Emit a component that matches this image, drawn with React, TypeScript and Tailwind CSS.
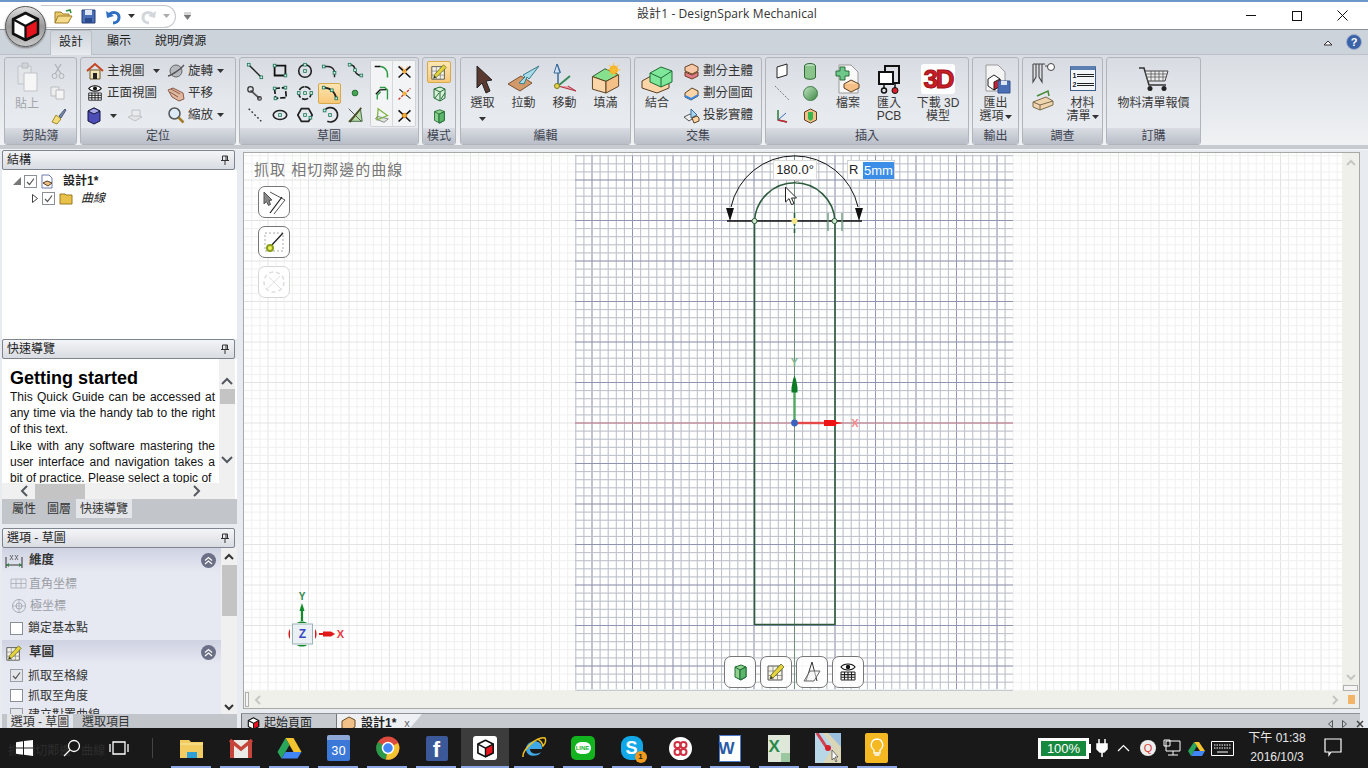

import React from "react";

const Sv = ({ w = 20, h = 20, vb, children, className = "" }: { w?: number; h?: number; vb?: string; children?: React.ReactNode; className?: string }) => (
  <svg width={w} height={h} viewBox={vb || `0 0 ${w} ${h}`} className={`shrink-0 ${className}`} fill="none">{children}</svg>
);
const P = ({ x, y }: { x: number; y: number }) => <rect x={x - 1.5} y={y - 1.5} width={3} height={3} fill="#d5efdc" stroke="#18745a" strokeWidth={0.9} />;
const Caret = ({ className = "" }: { className?: string }) => (
  <svg width={7} height={4} viewBox="0 0 7 4" className={`shrink-0 ${className}`}><path d="M0 0h7L3.5 4z" fill="#333" /></svg>
);

/* logo cube */
const Cube = ({ s = 30 }: { s?: number }) => (
  <Sv w={s} h={s} vb="0 0 30 30">
    <path d="M15 2l12 6v14l-12 6-12-6V8z" fill="#fff" stroke="#111" strokeWidth={2.6} strokeLinejoin="round" />
    <path d="M15 14.5L27 8v14l-12 6z" fill="#e5141d" stroke="#111" strokeWidth={2.2} strokeLinejoin="round" />
    <path d="M3 8l12 6.5" stroke="#111" strokeWidth={2.4} />
  </Sv>
);

/* sketch tools */
const tools: React.ReactNode[] = [
  <><path d="M3 3L17 17" stroke="#222" strokeWidth={1.6} /><P x={3} y={3} /><P x={17} y={17} /></>,
  <><path d="M4 4h12v11H4z" stroke="#111" strokeWidth={2} /><P x={4} y={4} /><P x={16} y={15} /></>,
  <><circle cx={10} cy={10} r={7} stroke="#222" strokeWidth={1.8} /><P x={10} y={10} /><P x={10} y={3} /></>,
  <><path d="M3 5h5a7 7 0 0 1 7 7v5" stroke="#222" strokeWidth={1.6} /><P x={3} y={5} /><P x={15} y={12} /></>,
  <><path d="M4 3c6 0 6 4 6 6s2 6 7 6" stroke="#222" strokeWidth={1.6} /><P x={4} y={3} /><P x={10} y={9} /><P x={17} y={15} /></>,
  <><path d="M5 7l10 9" stroke="#555" strokeWidth={2} /><circle cx={5} cy={6} r={3} stroke="#333" strokeWidth={1.4} /><circle cx={15} cy={16} r={2} stroke="#333" strokeWidth={1.4} /></>,
  <><path d="M4 5l12-1 1 11-12 1z" stroke="#111" strokeWidth={1.8} strokeDasharray="6 2" /><P x={4} y={5} /><P x={16} y={4} /><P x={5} y={16} /></>,
  <><path d="M10 3a7 7 0 1 1-.1 0" stroke="#222" strokeWidth={1.8} strokeDasharray="7 2" /><P x={3} y={10} /><P x={17} y={10} /><P x={10} y={10} /></>,
  <><path d="M3 4c7 0 13 5 14 12" stroke="#222" strokeWidth={1.8} /><P x={3} y={4} /><P x={12} y={7} /><P x={17} y={16} /></>,
  <><circle cx={10} cy={10} r={3.2} fill="#4aa35a" stroke="#1f6b2e" /></>,
  <><path d="M3 3l14 14" stroke="#333" strokeWidth={1.6} strokeDasharray="2 2.5" /></>,
  <><ellipse cx={10} cy={10} rx={7.5} ry={5} stroke="#222" strokeWidth={1.8} /><P x={10} y={10} /></>,
  <><path d="M6 3h8l4 7-4 7H6L2 10z" stroke="#222" strokeWidth={1.9} /><P x={10} y={10} /><P x={16} y={13} /></>,
  <><path d="M4 5a8 8 0 1 1 3 12" stroke="#222" strokeWidth={1.9} /><P x={10} y={10} /><P x={4} y={5} /></>,
  <><path d="M3 17L16 3l2 14z" fill="#b9d9a9" stroke="#38633e" /><path d="M4 18L17 2" stroke="#4a4a22" strokeWidth={2} /><path d="M3 3l14 14" stroke="#444" /></>,
];
const cluster: React.ReactNode[] = [
  <><path d="M2 4h7" stroke="#111" strokeWidth={1.8} /><path d="M9 4a9 9 0 0 1 8 9v4" stroke="#2d9a43" strokeWidth={1.8} /></>,
  <><path d="M3 17L17 4M3 4l14 13" stroke="#111" strokeWidth={1.7} /><circle cx={10} cy={10} r={2.5} fill="#f5b03c" /><path d="M6 4l4 5 4-5" stroke="#e08a1f" /></>,
  <><path d="M3 11l5-5h8" stroke="#111" strokeWidth={1.7} transform="rotate(-2)" /><path d="M8 3h6l3 3v11M5 17v-5l4-4" stroke="#2d9a43" strokeWidth={1.6} /></>,
  <><path d="M3 17L17 4" stroke="#c8362a" strokeWidth={1.6} strokeDasharray="3 1.5" /><path d="M4 5l13 11" stroke="#333" strokeWidth={1.2} /><circle cx={10} cy={10} r={2.5} fill="#f5b03c" /></>,
  <><path d="M3 14l10 4 5-4-13-3z" fill="#dfe7df" stroke="#777" /><path d="M6 2l11 8-12 5z" stroke="#7cb342" strokeWidth={1.5} /></>,
  <><path d="M3 4l14 13M3 17L17 4" stroke="#111" strokeWidth={1.8} /><circle cx={10} cy={10} r={2.6} fill="#f4b32e" stroke="#d06a12" /></>,
];

const Group = ({ w, label, children, className = "" }: { w: string; label: string; children?: React.ReactNode; className?: string }) => (
  <div className={`${w} h-[88px] flex flex-col rounded-[3px] border border-[#b0b5bc] overflow-hidden bg-gradient-to-b from-[#d8dce2] via-[#e5e8ed] to-[#e9ecf0] shrink-0`}>
    <div className={`h-[71px] ${className}`}>{children}</div>
    <div className="h-[16px] leading-[16px] text-center text-[12px] text-[#3c4250] bg-gradient-to-b from-[#d9dce2] to-[#b9bec8]">{label}</div>
  </div>
);

const Large = ({ w = "w-[41px]", icon, lines, caret }: { w?: string; icon: React.ReactNode; lines: string[]; caret?: boolean }) => (
  <div className={`${w} flex flex-col items-center pt-[5px]`}>
    <div className="h-[31px] flex items-center justify-center">{icon}</div>
    {lines.map((l, i) => (
      <div key={i} className={`text-[12px] leading-[13px] whitespace-nowrap text-[#3a3a3a] flex items-center gap-[1px] ${i === 0 ? "mt-[3px]" : ""}`}>
        {l}{caret && i === lines.length - 1 && lines.length > 1 ? <Caret /> : null}
      </div>
    ))}
    {caret && lines.length === 1 ? <Caret className="mt-[7px]" /> : null}
  </div>
);

const Small = ({ icon, text, caret, w }: { icon: React.ReactNode; text: string; caret?: boolean; w: string }) => (
  <div className={`${w} h-[22px] flex items-center gap-[3px] text-[12.5px] whitespace-nowrap text-[#333]`}>
    {icon}<span>{text}</span>{caret ? <Caret className="ml-auto mr-[7px]" /> : null}
  </div>
);

const Pin = () => (
  <svg width={8} height={10} viewBox="0 0 8 10"><path d="M1.500 1h5v4.500h-5zM0 5.500h8M4 6v4" stroke="#333" fill="none" /><path d="M5 1v4.500" stroke="#333" /></svg>
);
const PanelHead = ({ title }: { title: string }) => (
  <div className="h-[20px] shrink-0 mx-[2px] rounded-[2px] border border-[#7e8590] bg-gradient-to-b from-[#f4f5f7] to-[#d9dce2] flex items-center justify-between pl-[4px] pr-[5px] text-[12px] text-[#222]">
    <span>{title}</span><Pin />
  </div>
);
const Chk = ({ on, grey }: { on?: boolean; grey?: boolean }) => (
  <span className={`w-[13px] h-[13px] border ${grey ? "border-[#9a9ea6] bg-[#e4e6ea]" : "border-[#8b8f96] bg-white"} flex items-center justify-center shrink-0`}>
    {on ? <svg width={9} height={9} viewBox="0 0 9 9"><path d="M1 5l2.500 2.500L8 1.500" stroke="#555" strokeWidth={1.2} fill="none" /></svg> : null}
  </span>
);
const Collapse = () => (
  <span className="w-[15px] h-[15px] rounded-full bg-[#6c7087] flex items-center justify-center">
    <svg width={9} height={9} viewBox="0 0 9 9"><path d="M1 4.500l3.500-3 3.500 3M1 8l3.500-3L8 8" stroke="#fff" strokeWidth={1.1} fill="none" /></svg>
  </span>
);
const Chev = ({ d, c = "#55595f" }: { d: string; c?: string }) => (
  <svg width={12} height={12} viewBox="0 0 12 12"><path d={d} stroke={c} strokeWidth={2} fill="none" /></svg>
);

const xs = (a: number, b: number, st: number) => { const r: number[] = []; const n0 = Math.ceil((a - 794.5) / st); for (let i = n0; 794.5 + i * st <= b; i++) r.push(i); return r; };

const Canvas = () => {
  const s = 8.1;
  return (
    <svg className="absolute inset-0" width={1100} height={538} viewBox="244 154 1100 538" fill="none">
      {xs(244, 1343, s).map(i => <line key={i} x1={794.5 + i * s} x2={794.5 + i * s} y1={154} y2={692} stroke={i % 5 === 0 ? "#e2e4e2" : "#eef0ee"} />)}
      {Array.from({ length: 70 }, (_, k) => k - 34).map(i => <line key={i} y1={424 + i * s} y2={424 + i * s} x1={244} x2={1343} stroke={i % 5 === 0 ? "#e2e4e2" : "#eef0ee"} />)}
      {xs(575, 1013, s).map(i => <line key={i} x1={794.5 + i * s} x2={794.5 + i * s} y1={156} y2={690} stroke={i % 5 === 0 ? "#9193b2" : "#bdc0ca"} />)}
      {Array.from({ length: 67 }, (_, k) => k - 33).map(i => <line key={i} y1={424 + i * s} y2={424 + i * s} x1={575} x2={1013} stroke={i % 5 === 0 ? "#9193b2" : "#bdc0ca"} />)}
      <line x1={575} x2={1013} y1={424} y2={424} stroke="#d98a92" />
      <line x1={794.5} x2={794.5} y1={156} y2={690} stroke="#6f8f7a" />
      {/* sketch */}
      <path d="M754.500 222V625.500H835V222A40.300 40.300 0 0 0 754.500 222" stroke="#2c5a3c" strokeWidth={1.6} />
      <path d="M727 222H862" stroke="#111" strokeWidth={1.3} />
      <path d="M731 208A65 65 0 0 1 858 208" stroke="#111" strokeWidth={1} />
      <path d="M726 209h8l-4 13zM855 209h8l-4 13z" fill="#111" />
      <circle cx={754.5} cy={222} r={2.6} fill="#cfe8cf" stroke="#2c5a3c" />
      <circle cx={834.5} cy={222} r={2.6} fill="#cfe8cf" stroke="#2c5a3c" />
      <path d="M828 214v18M842 214v18" stroke="#6b9c7d" strokeWidth={1.4} />
      <path d="M794.500 214v20" stroke="#24603a" strokeWidth={1.6} strokeDasharray="5 3" />
      <circle cx={794.5} cy={222} r={3} fill="#f4e88a" />
      <path d="M795 183l8-14 5 1-10 14z" fill="#bdbdbd" />
      {/* cursor */}
      <path d="M785.500 188v15l3.500-3.400 2.500 6 2.500-1-2.500-5.600h5z" fill="#fff" stroke="#222" />
      {/* axes */}
      <path d="M794.500 424V393" stroke="#4ea85e" strokeWidth={2.4} />
      <path d="M791.500 393.500v-5l1.500-8 1.500-4 1.500 4 1.500 8v5z" fill="#0d7a24" />
      <path d="M794.500 424H826" stroke="#e84848" strokeWidth={2.4} />
      <path d="M824 421h12v1.800l7 1.200-7 1.200v1.800h-12z" fill="#ec1414" />
      <circle cx={794.5} cy={424} r={3.4} fill="#3a62c0" />
      <text x={794.5} y={367} textAnchor="middle" fontSize={11} fontWeight="bold" fill="#7fb98e" fontFamily="Liberation Sans">Y</text>
      <text x={855} y={428} textAnchor="middle" fontSize={11} fontWeight="bold" fill="#f08a8a" fontFamily="Liberation Sans">X</text>
      {/* triad */}
      <path d="M302 622v-14" stroke="#118a2b" strokeWidth={2.2} />
      <path d="M299.500 612l2.500-8 2.500 8z" fill="#118a2b" />
      <text x={302} y={601} textAnchor="middle" fontSize={10} fontWeight="bold" fill="#2f8a4a" fontFamily="Liberation Sans">Y</text>
      <path d="M319 635h12" stroke="#e01818" strokeWidth={2} />
      <path d="M323 632.500h8l4 2.500-4 2.500h-8z" fill="#e01818" />
      <text x={340.5} y={639} textAnchor="middle" fontSize={11} fontWeight="bold" fill="#e8393e" fontFamily="Liberation Sans">X</text>
      <path d="M290 630c-2 2-2 8 0 10zM315 630c2 2 2 8 0 10z" fill="#d81818" />
      <path d="M297 624c2-2 8-2 10 0zM297 646c2 2 8 2 10 0z" fill="#118a2b" />
      <rect x={292.5} y={625} width={20} height={20} fill="#eaf0f4" stroke="#9cb3b8" />
      <text x={302.5} y={639} textAnchor="middle" fontSize={12} fontWeight="bold" fill="#3848c0" fontFamily="Liberation Sans">Z</text>
    </svg>
  );
};

const ToolBtn = ({ children, dim, cls = "" }: { children?: React.ReactNode; dim?: boolean; cls?: string }) => (
  <div className={`w-[32px] h-[32px] rounded-[7px] border ${dim ? "border-[#d5d7d5]" : "border-[#777]"} bg-white/90 flex items-center justify-center ${cls}`}>{children}</div>
);

const Pencil = ({ s = 20 }: { s?: number }) => (
  <Sv w={s} h={s} vb="0 0 20 20">
    <path d="M2 4h14v14H2z" fill="#f4f1e4" stroke="#555" />
    <path d="M2 9h14M2 13.500h14M7 4v14M11.500 4v14" stroke="#777" strokeWidth={0.7} />
    <path d="M4 17l1-4L15 2l3 3L7 16z" fill="#e6d23a" stroke="#5c6a1e" strokeWidth={0.8} />
    <path d="M4 17l1-3 2 2z" fill="#333" />
  </Sv>
);
const GreenCube = ({ s = 18 }: { s?: number }) => (
  <Sv w={s} h={s} vb="0 0 18 18">
    <path d="M4 4l6-2 5 2v10l-5 3-6-3z" fill="#8fd08f" stroke="#1e6b34" />
    <path d="M4 4l5 3 6-3M9 7v10" stroke="#1e6b34" />
    <path d="M9 7l6-3v10l-6 3z" fill="#5bb56b" stroke="#1e6b34" />
  </Sv>
);
const EyeGrid = ({ s = 20 }: { s?: number }) => (
  <Sv w={s} h={s} vb="0 0 20 20">
    <path d="M3 5c3-4 11-4 14 0-3 4-11 4-14 0z" fill="#fff" stroke="#111" strokeWidth={1.2} />
    <circle cx={10} cy={5} r={2.2} fill="#111" />
    <path d="M3 10h14v8H3z" fill="#fff" stroke="#222" />
    <path d="M3 12.600h14M3 15.300h14M6.500 10v8M10 10v8M13.500 10v8" stroke="#222" strokeWidth={1.1} />
  </Sv>
);

const stripes = [40, 40, 40, 40, 40, 40, 48, 40, 40, 40, 40, 40, 40, 40, 40];

const App = () => (
  <div className="relative w-[1368px] h-[768px] overflow-hidden flex flex-col bg-[#e8ebef] text-[#222] font-['Liberation_Sans','Noto_Sans_CJK_TC',sans-serif]">
    {/* title bar */}
    <div className="h-[30px] shrink-0 bg-white border-t-[2px] border-t-[#6d97c9] border-b border-b-[#8c9097] flex items-center relative">
      <div className="ml-[41px] h-[23px] w-[135px] mt-[1px] rounded-r-full border border-[#c4c7cc] border-l-0 flex items-center pl-[12px]">
        <Sv w={20} h={17}><path d="M2 15V4h6l2 2h6v3" fill="#e9c96a" stroke="#a07c28" /><path d="M2 15l3-7h14l-4 7z" fill="#f4dc8c" stroke="#a07c28" /><path d="M13 3l4-1 1 3" stroke="#2f8f3c" strokeWidth={1.5} /></Sv>
        <Sv w={17} h={17} className="ml-[7px]"><path d="M2 2h13v13H2z" fill="#4b6fb5" stroke="#233d78" /><path d="M5 2h7v5H5z" fill="#dfe7f5" /><path d="M5 10h7v5H5z" fill="#2b4a8c" /></Sv>
        <Sv w={17} h={17} className="ml-[8px]"><path d="M4 7c3-4 10-3 10 2s-4 6-6 6" stroke="#2f6fc1" strokeWidth={3} /><path d="M1 3l1 7 7-2z" fill="#2f6fc1" /></Sv>
        <Caret className="ml-[6px]" />
        <Sv w={17} h={17} className="ml-[5px]"><path d="M13 7c-3-4-10-3-10 2s4 6 6 6" stroke="#d3d7dc" strokeWidth={3} /><path d="M16 3l-1 7-7-2z" fill="#d3d7dc" /></Sv>
        <Caret className="ml-[6px] opacity-40" />
      </div>
      <svg width={7} height={8} viewBox="0 0 7 8" className="ml-[8px]"><path d="M0 1h7M0 3h7L3.500 7.500z" fill="#777" stroke="#777" strokeWidth={0.6} /></svg>
      <div className="absolute left-[637px] top-[3px] text-[12px] tracking-[0.1px] text-[#333] font-['Open_Sans','Noto_Sans_CJK_TC',sans-serif] whitespace-nowrap">設計1 - DesignSpark Mechanical</div>
      <div className="absolute right-[3px] top-0 h-full flex items-center text-[#111]">
        <div className="w-[46px] flex justify-center"><div className="w-[10px] h-[1px] bg-[#111]" /></div>
        <div className="w-[45px] flex justify-center"><div className="w-[10px] h-[10px] border border-[#111]" /></div>
        <div className="w-[46px] flex justify-center"><Sv w={11} h={11}><path d="M.5.5l10 10M10.500.5l-10 10" stroke="#111" /></Sv></div>
      </div>
    </div>
    {/* tabs row */}
    <div className="h-[25px] shrink-0 bg-[#cdd3db] border-b border-b-[#bcc1c8] flex items-end pl-[50px] text-[12px] relative">
      <div className="w-[42px] h-[25px] -mb-px pb-[2px] rounded-t-[3px] bg-gradient-to-b from-[#cfd5dc] to-[#e8ebef] border border-b-0 border-[#bcc1c8] flex items-center justify-center">設計</div>
      <div className="w-[54px] h-[24px] pb-[2px] flex items-center justify-center">顯示</div>
      <div className="ml-[9px] h-[24px] pb-[2px] flex items-center">說明/資源</div>
      <div className="absolute right-[6px] top-[4px] flex items-center gap-[13px]">
        <Sv w={10} h={7}><path d="M1 6l4-4 4 4z" fill="#fff" stroke="#333" /></Sv>
        <span className="w-[16px] h-[16px] rounded-full bg-[#3c62a8] border border-[#9fb0cc] text-white text-[11px] font-bold flex items-center justify-center">?</span>
      </div>
    </div>
    {/* logo */}
    <div className="absolute z-10 left-[5px] top-[6px] w-[41px] h-[41px] rounded-full bg-gradient-to-b from-[#dedede] via-[#9a9a9a] to-[#c8c8c8] border border-[#555] flex items-center justify-center shadow-[0_1px_2px_#777]">
      <Cube s={31} />
    </div>
    {/* ribbon */}
    <div className="h-[90px] shrink-0 flex gap-[3px] pl-[4px] pt-[2px] bg-gradient-to-b from-[#d9dde3] to-[#f0f2f4]">
      <Group w="w-[73px]" label="剪貼簿" className="flex">
        <div className="w-[44px] flex flex-col items-center pt-[4px] text-[#a2a6ab]">
          <Sv w={24} h={30}><path d="M3 4h13v18H3z" fill="#e3e5e8" stroke="#c0c3c8" /><path d="M7 1h6v5H7z" fill="#d0d3d7" stroke="#b8bbc0" /><path d="M9 11h13v18H9z" fill="#f6f6f7" stroke="#c0c3c8" /></Sv>
          <div className="text-[12px] mt-[3px]">貼上</div>
        </div>
        <div className="flex flex-col items-center gap-[6px] pt-[5px]">
          <Sv w={16} h={16}><path d="M5 1l6 10M11 1L5 11" stroke="#b0b3b8" strokeWidth={1.3} /><circle cx={4.5} cy={13} r={2.5} stroke="#b0b3b8" /><circle cx={11.5} cy={13} r={2.5} stroke="#b0b3b8" /></Sv>
          <Sv w={16} h={16}><path d="M1 2h8v9H1z" fill="#eee" stroke="#bbb" /><path d="M6 5h8v9H6z" fill="#f5f5f5" stroke="#bbb" /></Sv>
          <Sv w={18} h={18}><path d="M3 15l4-7 5 4-4 5z" fill="#f2dc7a" stroke="#a08a2a" /><path d="M10 9l6-7 1 1-5 8z" fill="#7a8aa8" stroke="#4a5a78" /></Sv>
        </div>
      </Group>
      <Group w="w-[156px]" label="定位" className="pl-[5px] pt-[2px] grid grid-cols-[81px_64px] grid-rows-[22px_22px_23px]">
        <Small w="w-[81px]" caret text="主視圖" icon={<Sv w={18} h={18}><path d="M1 9l8-7 8 7" stroke="#c64320" strokeWidth={2} /><path d="M4 8h10v9H4z" fill="#f2e4b8" stroke="#6a5a2a" /><path d="M7 11h4v6H7z" fill="#222" /></Sv>} />
        <Small w="w-[64px]" caret text="旋轉" icon={<Sv w={18} h={18}><circle cx={9} cy={9} r={6} fill="#b6b9bf" stroke="#666" /><path d="M1 14C5 13 14 7 17 3" stroke="#555" strokeWidth={1.3} /></Sv>} />
        <Small w="w-[81px]" text="正面視圖" icon={<EyeGrid s={18} />} />
        <Small w="w-[64px]" text="平移" icon={<Sv w={18} h={18}><path d="M1 6l5-2 10 5 1 6-5 2-7-4z" fill="#e0b8a0" stroke="#8a5a48" /><path d="M4 5l9 5M3 8l8 5" stroke="#8a5a48" /></Sv>} />
        <div className="h-[23px] flex items-center">
          <Sv w={16} h={18}><path d="M2 4l6-3 6 3v10l-6 3-6-3z" fill="#4d4db8" stroke="#14143c" /><path d="M2 4l6 3 6-3-6-3z" fill="#a8a8e8" stroke="#14143c" /></Sv>
          <Caret className="ml-[8px]" />
          <Sv w={18} h={16} className="ml-[9px] opacity-40"><path d="M2 9l7-3 7 3-7 4z" fill="#ddd" stroke="#888" /><path d="M6 2h8v6H6z" fill="#eee" stroke="#888" /></Sv>
        </div>
        <Small w="w-[64px]" caret text="縮放" icon={<Sv w={18} h={18}><circle cx={7.5} cy={7.5} r={5.5} fill="#dcebf7" stroke="#555" strokeWidth={1.5} /><path d="M11.500 11.500l5 5" stroke="#a07c28" strokeWidth={2.5} /></Sv>} />
      </Group>
      <Group w="w-[180px]" label="草圖" className="flex pl-[2px] pt-[2px]">
        <div className="grid grid-cols-[repeat(5,25px)] grid-rows-[repeat(3,22px)] w-[125px]">
          {tools.map((t, i) => (
            <div key={i} className="flex items-center justify-center">
              <div className={`w-[23px] h-[21px] flex items-center justify-center rounded-[2px] ${i === 8 ? "bg-gradient-to-b from-[#fde6b2] to-[#f8c878] border border-[#d7a94f]" : ""}`}>
                <Sv w={18} h={18} vb="0 0 20 20">{t}</Sv>
              </div>
            </div>
          ))}
        </div>
        <div className="ml-[3px] w-[46px] h-[67px] rounded-[2px] bg-[#f3f4f6] border border-[#cfd2d7] grid grid-cols-2 grid-rows-3">
          {cluster.map((t, i) => (
            <div key={i} className={`flex items-center justify-center ${i % 2 === 0 ? "border-r border-r-[#d6d8dc]" : ""}`}><Sv w={17} h={17} vb="0 0 20 20">{t}</Sv></div>
          ))}
        </div>
      </Group>
      <Group w="w-[34px]" label="模式" className="flex flex-col items-center pt-[3px]">
        <div className="w-[24px] h-[22px] rounded-[2px] bg-gradient-to-b from-[#fde6b2] to-[#f8c878] border border-[#d7a94f] flex items-center justify-center"><Pencil s={18} /></div>
        <div className="h-[22px] flex items-center"><Sv w={16} h={16}><path d="M3 3l6-2 5 2v9l-5 3-6-3z" fill="#d8efd8" stroke="#1e6b34" /><path d="M3 3l6 3 5-3M9 6v9M4 12l4-5M10 13l4-6" stroke="#1e6b34" /></Sv></div>
        <div className="h-[22px] flex items-center"><GreenCube s={16} /></div>
      </Group>
      <Group w="w-[171px] ml-[1px]" label="編輯" className="flex pl-[1px]">
        <Large caret lines={["選取"]} icon={<Sv w={24} h={30}><path d="M6 2l15 14-6 1 4 10-4 2-4-10-5 5z" fill="#5a3a30" stroke="#222" /></Sv>} />
        <Large lines={["拉動"]} icon={<Sv w={34} h={30}><path d="M1 20l13-8 11 7-12 8z" fill="#d29a6a" stroke="#7a5230" /><path d="M32 2L16 11l2 2-6 6 5 1 3-7 2 2z" fill="#a8dce8" stroke="#3a7a8a" /></Sv>} />
        <Large lines={["移動"]} icon={<Sv w={30} h={31}><path d="M7 1l3 8H8v14" stroke="#3a6a9a" strokeWidth={1.5} /><path d="M4 10l3-9 3 9z" fill="#cfe3f2" stroke="#3a6a9a" /><path d="M8 23L20 13" stroke="#3a8a5a" strokeWidth={2} /><path d="M8 23l18 5-8-5" fill="#e8a0a8" stroke="#b03040" /><circle cx={7} cy={23} r={2.5} fill="#e8d24a" stroke="#7a7a1a" /></Sv>} />
        <Large lines={["填滿"]} icon={<Sv w={32} h={31} vb="0 0 32 32"><path d="M2 14l13-8 14 6-13 7z" fill="#86e08e" stroke="#2e5a2e" /><path d="M2 14v13l14 4V19z" fill="#fbd4a8" stroke="#5a4020" /><path d="M16 19v12l13-7V12z" fill="#f4c088" stroke="#5a4020" /><circle cx={24} cy={7} r={4.5} fill="#f8b020" /><path d="M24 0v14M17 7h14M19 2l10 10M29 2L19 12" stroke="#f8c040" /></Sv>} />
      </Group>
      <Group w="w-[128px]" label="交集" className="flex">
        <Large w="w-[44px]" lines={["結合"]} icon={<Sv w={32} h={30}><path d="M1 17l9-5 18 5v7l-12 5-15-5z" fill="#fbd4a8" stroke="#5a4020" /><path d="M9 9l11-6 11 4v11l-11 5-11-5z" fill="#7fe79a" stroke="#1e6b34" /><path d="M9 9l11 5 11-7M20 14v9" stroke="#1e6b34" /></Sv>} />
        <div className="flex flex-col pt-[2px] pl-[4px]">
          <Small w="w-[76px]" text="劃分主體" icon={<Sv w={17} h={17}><path d="M2 4l7-3 6 3v4l-6 3-7-3z" fill="#f6c8a8" stroke="#6a4020" /><path d="M2 9l7 3 6-3v4l-6 3-7-3z" fill="#e27a8a" stroke="#6a4020" /></Sv>} />
          <Small w="w-[76px]" text="劃分圖面" icon={<Sv w={17} h={17}><path d="M2 8l7-5 6 3v5l-7 4-6-3z" fill="#fbd4a8" stroke="#5a4020" /><path d="M2 11l6 3 7-4" stroke="#3a8adf" strokeWidth={2} /></Sv>} />
          <Small w="w-[76px]" text="投影實體" icon={<Sv w={17} h={17}><path d="M1 10l6-3 5 3-6 4z" fill="#eee" stroke="#555" /><path d="M8 2l6 6-6 3z" fill="#a8d8f0" stroke="#3a6a9a" /><path d="M9 11l5-2 2 2v3l-5 2z" fill="#fbd4a8" stroke="#5a4020" /></Sv>} />
        </div>
      </Group>
      <Group w="w-[204px]" label="插入" className="flex pl-[2px] pt-[2px]">
        <div className="grid grid-cols-[28px_28px] grid-rows-[22px_22px_23px] w-[60px] justify-items-center items-center">
          <Sv w={14} h={16}><path d="M2 4l10-3v11L2 15z" fill="#fff" stroke="#222" /></Sv>
          <Sv w={14} h={17}><ellipse cx={7} cy={3} rx={5.5} ry={2.5} fill="#b8dcb8" stroke="#2e6a3a" /><path d="M1.500 3v11c0 3 11 3 11 0V3" fill="#8ac48a" stroke="#2e6a3a" /></Sv>
          <Sv w={16} h={16}><path d="M1 1l14 14" stroke="#777" strokeDasharray="2 1.5" /></Sv>
          <span className="w-[15px] h-[15px] rounded-full bg-gradient-to-br from-[#bfe4bf] to-[#3d8a48] border border-[#3d7a48]" />
          <Sv w={14} h={14}><path d="M3 1v10l9 2" stroke="#2a7a3a" strokeWidth={1.5} /><path d="M3 11l8-7" stroke="#3a6ab8" /><path d="M3 11l9 2" stroke="#c8283a" strokeWidth={1.5} /></Sv>
          <Sv w={15} h={16}><path d="M7.500 1l6 3v8l-6 3-6-3V4z" fill="#f4c088" stroke="#5a4020" /><path d="M5 4l5 0v7l-2.500 2L5 11z" fill="#35b54a" /></Sv>
        </div>
        <Large w="w-[42px] -ml-[1px] -mt-[2px]" lines={["檔案"]} icon={<Sv w={26} h={30}><path d="M4 1h12l7 7v21H4z" fill="#f8f8f8" stroke="#999" /><path d="M1 7h4V3h5v4h4v5h-4v4H5v-4H1z" fill="#6ec88a" stroke="#2a6a3a" /><path d="M9 20l7-4 8 4-8 5z" fill="#fbd4a8" stroke="#5a4020" /><path d="M9 20v4l7 4 8-4v-4" fill="#f4c088" stroke="#5a4020" /></Sv>} />
        <Large w="w-[40px] -mt-[2px]" lines={["匯入", "PCB"]} icon={<Sv w={24} h={30}><path d="M8 2h14v17H8z" stroke="#111" strokeWidth={2} /><path d="M2 8h14v12H2z" fill="#fff" stroke="#111" strokeWidth={2} /><path d="M7 20v5M18 19v6" stroke="#111" strokeWidth={1.5} /><circle cx={7} cy={26.5} r={2.5} stroke="#111" strokeWidth={1.5} /><circle cx={18} cy={26.5} r={3} fill="#d81e2a" stroke="#111" /></Sv>} />
        <Large w="w-[58px] -mt-[2px]" lines={["下載 3D", "模型"]} icon={<div className="w-[34px] h-[30px] bg-white rounded-[3px] flex items-center justify-center text-[26px] leading-none font-bold text-[#c81e25] tracking-[-2px] [-webkit-text-stroke:1px_#a01018]">3D</div>} />
      </Group>
      <Group w="w-[47px]" label="輸出">
        <Large w="w-[45px]" caret lines={["匯出", "選項"]} icon={<Sv w={30} h={30}><path d="M5 1h12l7 7v19H5z" fill="#f4f4f4" stroke="#9a9a9a" /><path d="M7 15l6-4 6 4v7l-6 4-6-4z" fill="#fff" stroke="#222" /><path d="M13 18l6-3v7l-6 4z" fill="#d81e2a" stroke="#222" /><path d="M17 17h12v12H17z" fill="#4b6fb5" stroke="#33518c" /><path d="M20 17h6v4h-6z" fill="#dfe7f5" /></Sv>} />
      </Group>
      <Group w="w-[81px]" label="調查" className="grid grid-cols-[38px_41px] pl-[1px]">
        <div className="flex flex-col items-center pt-[4px] gap-[5px]">
          <Sv w={26} h={22}><path d="M3 2h12M3 2v18l3-5V2M12 2v18l-3-5V2M15 4h3" stroke="#444" strokeWidth={1.1} /><circle cx={21} cy={5} r={3.5} fill="#fff" stroke="#444" /></Sv>
          <Sv w={22} h={22}><path d="M1 13l13-5 7 4v4l-13 5-7-3z" fill="#f0d4b0" stroke="#7a6a4a" /><path d="M5 7l11-5 1 5" stroke="#4a8a3a" strokeWidth={1.5} /><path d="M1 13l7 3 13-4M8 16v5" stroke="#7a6a4a" /></Sv>
        </div>
        <Large w="w-[41px]" caret lines={["材料", "清單"]} icon={<div className="w-[26px] h-[25px] border border-[#3e5c8a] bg-[#f4f6fa] border-t-[4px] border-t-[#5a7fb0] flex flex-col justify-center gap-[1px] text-[7px] leading-[8px] font-bold pl-[2px]"><div className="flex items-center gap-[1px]">1<span className="flex-1 h-[3px] mr-[1px] border-y border-[#222]" /></div><div className="flex items-center gap-[1px]">2<span className="flex-1 h-[3px] mr-[1px] border-y border-[#222]" /></div></div>} />
      </Group>
      <Group w="w-[95px]" label="訂購">
        <Large w="w-[93px]" lines={["物料清單報價"]} icon={<Sv w={32} h={26}><path d="M1 2h5l5 17h17" stroke="#333" strokeWidth={1.6} /><path d="M7 5h23l-3 10H10z" fill="#eee" stroke="#444" /><path d="M8 8h21M9 11h19M13 5v10M17 5v10M21 5v10M25 5v10" stroke="#555" strokeWidth={0.8} /><circle cx={12} cy={22.5} r={2.5} fill="#222" /><circle cx={26} cy={22.5} r={2.5} fill="#222" /></Sv>} />
      </Group>
    </div>
    <div className="h-[4px] shrink-0 bg-[#c7cbd0]" />

    {/* main */}
    <div className="flex-1 min-h-0 flex bg-[#e8ebef] border-t border-t-[#f4f5f7]">
      {/* left */}
      <div className="w-[237px] shrink-0 flex flex-col">
        <div className="h-[189px] flex flex-col">
          <PanelHead title="結構" />
          <div className="flex-1 bg-white ml-[2px] text-[12px]">
            <div className="h-[16px] mt-[3px] flex items-center pl-[11px] gap-[3px]">
              <svg width={8} height={8} viewBox="0 0 8 8"><path d="M0 8h8V0z" fill="#777" /></svg>
              <Chk on />
              <Sv w={14} h={15}><path d="M2 1h7l3 3v10H2z" fill="#fff" stroke="#6a7ab0" /><path d="M3 9l4-2 5 2-4 3z" fill="#f0c088" stroke="#5a4020" /></Sv>
              <span className="ml-[6px] font-bold whitespace-nowrap">設計1*</span>
            </div>
            <div className="h-[18px] flex items-center pl-[30px] gap-[4px]">
              <svg width={6} height={9} viewBox="0 0 6 9"><path d="M.5.5l5 4-5 4z" fill="#fff" stroke="#444" /></svg>
              <Chk on />
              <Sv w={14} h={14}><path d="M1 3h5l1 1h6v9H1z" fill="#e8c04a" stroke="#9a7a20" /></Sv>
              <span className="ml-[4px] italic">曲線</span>
            </div>
          </div>
        </div>
        <div className="h-[185px] flex flex-col">
          <PanelHead title="快速導覽" />
          <div className="h-[140px] relative ml-[2px] bg-white overflow-hidden flex">
            <div className="w-[217px] pl-[8px] pr-[4px] pt-[8px]">
              <div className="text-[18px] leading-[22px] font-bold text-black">Getting started</div>
              <div className="text-[12px] leading-[16.2px] text-[#111] text-justify">This Quick Guide can be accessed at any time via the handy tab to the right of this text.<br />Like with any software mastering the user interface and navigation takes a bit of practice. Please select a topic of</div>
            </div>
            <div className="w-[16px] bg-[#f0f0f0] flex flex-col items-center">
              <div className="h-[30px] flex items-end pb-[2px]"><Chev d="M1 9l5-5 5 5" /></div>
              <div className="w-[15px] h-[15px] bg-[#c4c4c4]" />
              <div className="flex-1 flex items-end pb-[2px] mb-[31px]"><Chev d="M1 3l5 5 5-5" /></div>
            </div>
            <div className="absolute left-0 bottom-0 w-[217px] h-[16px] bg-[#f0f0f0] flex items-center">
              <div className="ml-[17px]"><Chev d="M8 1L3 6l5 5" /></div>
              <div className="ml-[4px] w-[50px] h-[15px] bg-[#c4c4c4]" />
              <div className="ml-auto mr-[17px]"><Chev d="M4 1l5 5-5 5" /></div>
            </div>
          </div>
          <div className="flex-1 ml-[2px] bg-[#c2c6cb] flex items-start pl-[5px] text-[12px] text-[#333]">
            <div className="h-[19px] w-[34px] flex items-center justify-center">屬性</div>
            <div className="h-[19px] w-[34px] flex items-center justify-center ml-[1px]">圖層</div>
            <div className="h-[19px] w-[56px] flex items-center justify-center bg-[#e3e5e8]">快速導覽</div>
          </div>
        </div>
        <div className="flex-1 min-h-0 flex flex-col pt-[4px]">
          <PanelHead title="選項 - 草圖" />
          <div className="h-[166px] shrink-0 ml-[2px] overflow-hidden flex">
            <div className="flex-1 bg-[#e7e9f2] text-[12px] text-[#333]">
              <div className="h-[25px] flex items-center pl-[3px] pr-[5px] bg-gradient-to-b from-[#cfd3e2] to-[#e7e9f2]">
                <Sv w={18} h={18}><path d="M1 5v11M17 5v11M1 13h16" stroke="#333" /><path d="M1 13l3-2v4zM17 13l-3-2v4z" fill="#3a8a4a" /><path d="M5 3l3 5M8 3L5 8M10 3l3 5M13 3l-3 5" stroke="#555" strokeWidth={0.8} /></Sv>
                <span className="ml-[6px] font-bold text-[12.5px] flex-1">維度</span>
                <Collapse />
              </div>
              <div className="h-[21px] flex items-center pl-[8px] gap-[2px] text-[#9a9da4]"><Sv w={17} h={11}><path d="M1 1h15v9H1zM1 5.500h15M6 1v9M11 1v9" stroke="#a8abb2" strokeWidth={0.8} /></Sv>直角坐標</div>
              <div className="h-[23px] flex items-center pl-[9px] gap-[3px] text-[#9a9da4]"><Sv w={16} h={16}><circle cx={8} cy={8} r={6.5} stroke="#a8abb2" /><circle cx={8} cy={8} r={3} stroke="#a8abb2" /><path d="M8 1v14M1 8h14" stroke="#a8abb2" strokeWidth={0.7} /></Sv>極坐標</div>
              <div className="h-[22px] flex items-center pl-[8px] gap-[5px]"><Chk />鎖定基本點</div>
              <div className="h-[25px] mt-[1px] flex items-center pl-[3px] pr-[5px] bg-gradient-to-b from-[#cfd3e2] to-[#e7e9f2]">
                <Pencil s={18} />
                <span className="ml-[6px] font-bold text-[12.5px] flex-1">草圖</span>
                <Collapse />
              </div>
              <div className="h-[21px] flex items-center pl-[8px] gap-[5px]"><Chk on grey />抓取至格線</div>
              <div className="h-[19px] flex items-center pl-[8px] gap-[5px]"><Chk />抓取至角度</div>
              <div className="h-[19px] flex items-center pl-[8px] gap-[5px]"><Chk grey />建立對置曲線</div>
            </div>
            <div className="w-[16px] bg-[#f0f0f0] flex flex-col items-center">
              <div className="h-[17px] flex items-center"><Chev d="M2 8l4-4 4 4" c="#333" /></div>
              <div className="w-[15px] h-[51px] bg-[#c4c4c4]" />
              <div className="flex-1 flex items-end pb-[1px]"><Chev d="M2 4l4 4 4-4" c="#333" /></div>
            </div>
          </div>
          <div className="ml-[2px] flex-1 bg-[#c2c6cb] flex items-start pl-[5px] text-[12px] text-[#333]">
            <div className="h-[16px] w-[66px] flex items-center justify-center bg-[#e3e5e8]">選項 - 草圖</div>
            <div className="h-[16px] flex items-center ml-[9px]">選取項目</div>
          </div>
        </div>
      </div>

      {/* center */}
      <div className="flex-1 min-w-0 flex flex-col pl-[6px] pr-[8px] pt-[2px]">
        <div className="h-[557px] shrink-0 border border-[#a6a9a6] bg-[#f0f0ea] flex flex-col">
          <div className="flex-1 min-h-0 flex">
            <div className="relative flex-1 bg-white overflow-hidden">
              <Canvas />
              <div className="absolute left-[10px] top-[6px] text-[15px] tracking-[1px] text-[#777] whitespace-nowrap">抓取 相切鄰邊的曲線</div>
              <div className="absolute left-[14px] top-[33px] flex flex-col gap-[8px]">
                <ToolBtn><Sv w={26} h={26}><path d="M9 3l15 8-11 14" stroke="#555" /><path d="M21 8L9 24" stroke="#222" strokeWidth={1.2} /><path d="M3 3l8 8-3 .5 1.500 4-2 1-2-4-2.500 2.500z" fill="#888" stroke="#555" /></Sv></ToolBtn>
                <ToolBtn><Sv w={26} h={26}><path d="M4 4h18v18H4z" stroke="#aaa" strokeDasharray="2 2" /><path d="M9 18L22 4" stroke="#222" strokeWidth={1.3} /><circle cx={9} cy={19} r={3} fill="#f0f060" stroke="#8aa01a" strokeWidth={2} /></Sv></ToolBtn>
                <ToolBtn dim><Sv w={26} h={26}><circle cx={13} cy={13} r={10} stroke="#ddd" strokeDasharray="4 3" strokeWidth={1.5} /><path d="M7 19L19 7M8 8l12 12" stroke="#e2e2e2" /></Sv></ToolBtn>
              </div>
              <div className="absolute left-[480px] top-[503px] flex gap-[4px]">
                <ToolBtn><GreenCube s={18} /></ToolBtn>
                <ToolBtn><Pencil s={20} /></ToolBtn>
                <ToolBtn><Sv w={20} h={22}><path d="M10 1L4 20M10 1l5 19" stroke="#333" /><path d="M2 20l6-10h10l-6 10z" stroke="#666" fill="#f2f2f2" fillOpacity={0.5} /></Sv></ToolBtn>
                <ToolBtn><EyeGrid s={20} /></ToolBtn>
              </div>
              <div className="absolute left-[529px] top-[7px] w-[44px] h-[20px] bg-white border border-[#d9d9d9] flex items-center justify-center text-[13px] text-[#222]">180.0°</div>
              <div className="absolute left-[603px] top-[7px] h-[20px] w-[48px] bg-white border border-[#cfd2d6] flex items-center text-[13px] pl-[1px]">
                <span className="w-[14px] text-[#222]">R</span>
                <span className="bg-[#3b8ee8] text-white px-[1px] h-[17px] leading-[17px]">5mm</span>
              </div>
            </div>
            <div className="w-[17px] flex flex-col items-center pt-[4px]">
              <Chev d="M2 8l4-4 4 4" c="#c5c7c5" />
              <div className="flex-1" />
              <Chev d="M2 4l4 4 4-4" c="#c5c7c5" />
              <div className="w-[15px] h-[6px] mt-[2px] border border-[#b0b0b0] bg-[#f5f5f5]" />
            </div>
          </div>
          <div className="h-[17px] shrink-0 flex items-center">
            <div className="w-[4px] h-[15px] ml-[1px] border border-[#b0b0b0] bg-[#f5f5f5]" />
            <div className="ml-[3px]"><Chev d="M8 2L4 6l4 4" c="#c5c7c5" /></div>
            <div className="flex-1" />
            <div className="mr-[7px]"><Chev d="M4 2l4 4-4 4" c="#c5c7c5" /></div>
            <div className="w-[7px] h-[9px] mr-[4px] bg-[#f3b468]" />
          </div>
        </div>
        <div className="flex-1 min-h-0 mt-[4px] -ml-[2px] relative bg-[#c7cbd0] border-t border-t-[#8f9398] flex items-start text-[12px]">
          <div className="h-[18px] w-[96px] border border-[#777] border-t-0 border-b-0 bg-[#c7cbd0] flex items-center pl-[5px] gap-[4px] text-[#222]"><Cube s={13} />起始頁面</div>
          <div className="h-[18px] w-[85px] bg-[#eef0f3] flex items-center pl-[4px] gap-[5px] [clip-path:polygon(0_0,100%_0,82%_100%,0_100%)]"><Sv w={15} h={15}><path d="M1 5l7-4 6 3v7l-7 4-6-3z" fill="#f0c088" stroke="#6a4a20" /></Sv><span className="font-bold">設計1*</span><span className="text-[#666] ml-[3px] text-[11px]">x</span></div>
          <div className="absolute right-[-4px] top-[6px] flex gap-[9px] items-center">
            <svg width={5} height={8} viewBox="0 0 5 8"><path d="M4.500.5L.5 4l4 3.500z" fill="none" stroke="#555" /></svg>
            <svg width={5} height={8} viewBox="0 0 5 8"><path d="M.5.5L4.500 4 .5 7.500z" fill="none" stroke="#555" /></svg>
            <svg width={8} height={8} viewBox="0 0 8 8"><path d="M1 1l6 6M7 1L1 7" stroke="#444" strokeWidth={1.5} /></svg>
          </div>
        </div>
      </div>
    </div>

    {/* taskbar */}
    <div className="h-[40px] shrink-0 bg-[#191919] flex items-center relative z-10 text-white">
      <div className="absolute left-[8px] top-[14px] text-[12px] text-[#2e2e2e] whitespace-nowrap">抓 相切鄰邊 &nbsp; 曲線</div>
      <div className="relative w-[48px] flex justify-center"><svg width={17} height={16} viewBox="0 0 17 16"><path d="M0 2.300L7 1.300v6.200H0zM8 1.100L17 0v7.500H8zM0 8.500h7v6.200l-7-1zM8 8.500h9V16l-9-1.200z" fill="#fff" /></svg></div>
      <div className="relative w-[48px] flex justify-center"><Sv w={18} h={18}><circle cx={11} cy={7} r={5.5} stroke="#fff" strokeWidth={1.3} /><path d="M7 11l-6 6" stroke="#fff" strokeWidth={1.3} /></Sv></div>
      <div className="relative w-[46px] flex justify-center"><Sv w={20} h={14}><path d="M4 1h12v12H4z" stroke="#fff" strokeWidth={1.3} /><path d="M1 3v8M19 3v8" stroke="#fff" strokeWidth={1.3} /></Sv></div>
      <div className="relative w-[1px] h-[20px] ml-[10px] bg-[#444]" />
      <div className="relative ml-[14px] flex items-center">
        {[
          <Sv w={25} h={24}><path d="M1 4h9l2 2h12v16H1z" fill="#f2cc60" /><path d="M8 16h10v6H8z" fill="#2f9fd8" /><path d="M1 8h23" stroke="#fbe8a8" /></Sv>,
          <Sv w={24} h={20}><path d="M1 2h22v18H1z" fill="#eceae6" /><path d="M1 2h4v18H1zM19 2h4v18h-4z" fill="#c5453a" /><path d="M1 2l11 9 11-9" stroke="#c5453a" strokeWidth={3.5} /></Sv>,
          <Sv w={25} h={22}><path d="M8.500 1h8l8 14h-8z" fill="#f4c430" /><path d="M8.500 1L.5 15l4 6.500L12.500 8z" fill="#2aa65c" /><path d="M4.500 21.500h16l4-6.500h-16z" fill="#4285f4" /></Sv>,
          <div className="w-[23px] h-[26px] bg-[#3b78d8] rounded-[2px] border-t-[5px] border-t-[#8ea9d8] flex items-center justify-center text-[13px] text-white font-['Roboto',sans-serif]">30</div>,
          <Sv w={24} h={24}><circle cx={12} cy={12} r={11.5} fill="#dd4b3e" /><path d="M12 12L2 6a11.500 11.500 0 0 0 8 17.500z" fill="#2a9a4a" /><path d="M12 12l10-5a11.500 11.500 0 0 1-12 16.500z" fill="#f4c430" /><circle cx={12} cy={12} r={5.5} fill="#4285f4" stroke="#fff" strokeWidth={1.5} /></Sv>,
          <div className="w-[22px] h-[25px] bg-[#3b5898] rounded-[2px] flex items-end justify-center text-[22px] leading-[23px] font-bold text-white">f</div>,
        ].map((c, i) => <div key={i} className="w-[49px] h-[40px] flex items-center justify-center">{c}</div>)}
        <div className="w-[48px] h-[40px] bg-[#3c3c3c] flex items-center justify-center"><div className="w-[24px] h-[24px] bg-white rounded-[3px] flex items-center justify-center"><Cube s={19} /></div></div>
        {[
          <Sv w={26} h={26}><path d="M5 14c0-7 9-10 14-6 2 2 2 4 2 6H9c0 5 7 6 11 3-3 6-15 5-15-3z" fill="#41a8e6" /><path d="M2 22C1 15 16 1 24 3c2 4-2 8-2 8-1-5-6-7-6-7" stroke="#f0c020" strokeWidth={1.5} /></Sv>,
          <div className="w-[24px] h-[24px] rounded-[5px] bg-[#12b31e] flex items-center justify-center"><div className="w-[16px] h-[12px] rounded-[7px] bg-white text-[#12b31e] text-[6px] font-bold leading-[12px] text-center">LINE</div></div>,
          <div className="relative"><div className="w-[22px] h-[24px] rounded-[9px] bg-[#12a7e6] text-white text-[18px] leading-[24px] font-bold text-center">S</div><span className="absolute -right-[4px] -bottom-[3px] w-[12px] h-[12px] rounded-full bg-[#f09a20] text-[8px] text-[#222] text-center leading-[12px] font-bold">1</span></div>,
          <div className="w-[23px] h-[23px] rounded-full bg-white flex items-center justify-center"><Sv w={17} h={17}><circle cx={5.5} cy={5} r={3} stroke="#d03040" strokeWidth={2} /><circle cx={11.5} cy={5} r={3} stroke="#d03040" strokeWidth={2} /><circle cx={5.5} cy={12} r={3} stroke="#d03040" strokeWidth={2} /><circle cx={11.5} cy={12} r={3} stroke="#d03040" strokeWidth={2} /></Sv></div>,
          <div className="relative w-[22px] h-[27px] bg-white border-[1px] border-[#4a7ac8]"><span className="absolute left-[-1px] top-[4px] text-[17px] leading-[17px] font-bold text-[#2b5ba8]">W</span></div>,
          <div className="relative w-[22px] h-[27px] bg-[#dfe8d8]"><span className="absolute left-[1px] top-[3px] text-[17px] leading-[17px] font-bold text-[#2a8a4a]">X</span><span className="absolute right-0 bottom-0 w-[9px] h-[9px] bg-[#9bc8a0]" /></div>,
          <Sv w={26} h={30}><path d="M0 0h26v30H0z" fill="#dcd6b8" /><path d="M13 0h13v14z" fill="#9cc0e0" /><path d="M0 0h8l10 14-10 16H0z" fill="#b8d8e8" /><path d="M2 0l10 15" stroke="#d04050" strokeWidth={3} /><circle cx={13} cy={15} r={3} fill="#d81e2a" /><path d="M17 17v10l2-2 2 4 1-1-2-4h3z" fill="#fff" stroke="#222" strokeWidth={0.6} /></Sv>,
          <div className="w-[23px] h-[30px] rounded-[2px] bg-[#f4b922] flex items-center justify-center"><Sv w={14} h={20}><path d="M7 1a6 6 0 0 0-3 11v3h6v-3A6 6 0 0 0 7 1zM4.500 17h5" stroke="#fff" strokeWidth={1.3} /></Sv></div>,
        ].map((c, i) => <div key={i} className="w-[49px] h-[40px] flex items-center justify-center">{c}</div>)}
      </div>
      <div className="relative ml-auto flex items-center pr-[26px]">
        <div className="w-[51px] h-[21px] border-[3px] border-white bg-[#16893f] text-[13px] leading-[15px] text-center">100%</div>
        <div className="w-[2px] h-[9px] bg-white" />
        <Sv w={12} h={20} className="ml-[5px]"><path d="M3 1v5M9 1v5M1 6h10v5l-3 3H4l-3-3zM6 14v5" stroke="#fff" strokeWidth={1.5} /><path d="M1 6h10v5l-3 3H4l-3-3z" fill="#fff" /></Sv>
        <Sv w={13} h={8} className="ml-[9px]"><path d="M1 7l5.500-5.500L12 7" stroke="#fff" strokeWidth={1.2} /></Sv>
        <div className="ml-[10px] w-[16px] h-[16px] rounded-full bg-[#eee] flex items-center justify-center"><span className="text-[#d8433a] text-[11px] leading-[12px]">Q</span></div>
        <Sv w={18} h={18} className="ml-[7px]"><path d="M3 2h14v10H3zM1 1h6v6H1zM10 12v4M5 16h10" stroke="#fff" /></Sv>
        <Sv w={17} h={15} className="ml-[7px]"><path d="M6 1h5l6 9h-5z" fill="#f4c430" /><path d="M6 1L0 10l3 5 6-10z" fill="#2aa65c" /><path d="M3 15h11l3-5H6z" fill="#4285f4" /></Sv>
        <Sv w={23} h={15} className="ml-[6px]"><path d="M.5.5h22v14H.5z" stroke="#fff" /><path d="M3 4h17M3 7h17" stroke="#fff" strokeDasharray="1.5 1" /><path d="M6 11h11" stroke="#fff" /></Sv>
        <div className="ml-[13px] w-[60px] text-center text-[12px] leading-[19.5px] text-[#e8e8e8]"><div>下午 01:38</div><div>2016/10/3</div></div>
        <Sv w={18} h={20} className="ml-[17px]"><path d="M1 1h16v13H7l-2 3v-3H1z" stroke="#fff" strokeWidth={1.2} /></Sv>
      </div>
      <div className="absolute left-0 right-0 bottom-0 h-[2px] flex pl-[171px] gap-[9px]">
        {stripes.map((w, i) => <div key={i} style={{ width: w, marginLeft: i === 6 || i === 7 ? -4 : 0 }} className="bg-[#8fa8e6]" />)}
      </div>
    </div>
  </div>
);

export default App;
